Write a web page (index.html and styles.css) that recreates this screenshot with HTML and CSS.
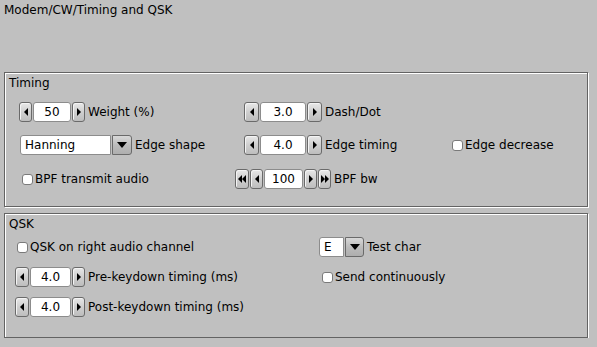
FILE: index.html
```html
<!DOCTYPE html>
<html lang="en">
<head>
    <meta charset="UTF-8">
    <title>Modem/CW/Timing and QSK</title>
    <link rel="stylesheet" href="styles.css">
</head>
<body>
    <div class="title">Modem/CW/Timing and QSK</div>

    <div class="group timing">
        <div class="group-label">Timing</div>

        <div class="row r1">
            <div class="cell">
                <div class="counter">
                    <span class="btn b13"><svg width="4" height="8" viewBox="0 0 4 8"><path d="M4 0v8L0 4z"/></svg></span>
                    <span class="field f38">50</span>
                    <span class="btn b13"><svg width="4" height="8" viewBox="0 0 4 8"><path d="M0 0v8l4-4z"/></svg></span>
                </div>
                <span class="lbl">Weight (%)</span>
            </div>
            <div class="cell">
                <div class="counter">
                    <span class="btn b15"><svg width="4" height="8" viewBox="0 0 4 8"><path d="M4 0v8L0 4z"/></svg></span>
                    <span class="field f46">3.0</span>
                    <span class="btn b15"><svg width="4" height="8" viewBox="0 0 4 8"><path d="M0 0v8l4-4z"/></svg></span>
                </div>
                <span class="lbl">Dash/Dot</span>
            </div>
        </div>

        <div class="row r2">
            <div class="cell shift1">
                <div class="choice">
                    <span class="choice-text c91">Hanning</span>
                    <span class="choice-btn w20"><svg width="10" height="6" viewBox="0 0 10 6"><path d="M0 0h10L5 6z"/></svg></span>
                </div>
                <span class="lbl">Edge shape</span>
            </div>
            <div class="cell">
                <div class="counter">
                    <span class="btn b15"><svg width="4" height="8" viewBox="0 0 4 8"><path d="M4 0v8L0 4z"/></svg></span>
                    <span class="field f46">4.0</span>
                    <span class="btn b15"><svg width="4" height="8" viewBox="0 0 4 8"><path d="M0 0v8l4-4z"/></svg></span>
                </div>
                <span class="lbl">Edge timing</span>
            </div>
            <div class="cell">
                <label class="check"><span class="box"></span>Edge decrease</label>
            </div>
        </div>

        <div class="row r3">
            <div class="cell shift3">
                <label class="check"><span class="box"></span>BPF transmit audio</label>
            </div>
            <div class="cell pull9">
                <div class="counter">
                    <span class="btn b14"><svg width="8" height="8" viewBox="0 0 8 8"><path d="M4 0v8L0 4zM8 0v8L4 4z"/></svg></span>
                    <span class="btn b13"><svg width="4" height="8" viewBox="0 0 4 8"><path d="M4 0v8L0 4z"/></svg></span>
                    <span class="field f39">100</span>
                    <span class="btn b13"><svg width="4" height="8" viewBox="0 0 4 8"><path d="M0 0v8l4-4z"/></svg></span>
                    <span class="btn b13"><svg width="8" height="8" viewBox="0 0 8 8"><path d="M0 0v8l4-4zM4 0v8l4-4z"/></svg></span>
                </div>
                <span class="lbl">BPF bw</span>
            </div>
        </div>
    </div>

    <div class="group qsk">
        <div class="group-label">QSK</div>

        <div class="row q1">
            <div class="cell shift2">
                <label class="check"><span class="box"></span>QSK on right audio channel</label>
            </div>
            <div class="cell">
                <div class="choice">
                    <span class="choice-text c24">E</span>
                    <span class="choice-btn w19"><svg width="10" height="6" viewBox="0 0 10 6"><path d="M0 0h10L5 6z"/></svg></span>
                </div>
                <span class="lbl">Test char</span>
            </div>
        </div>

        <div class="row q2">
            <div class="cell">
                <div class="counter">
                    <span class="btn b14"><svg width="4" height="8" viewBox="0 0 4 8"><path d="M4 0v8L0 4z"/></svg></span>
                    <span class="field f41">4.0</span>
                    <span class="btn b13"><svg width="4" height="8" viewBox="0 0 4 8"><path d="M0 0v8l4-4z"/></svg></span>
                </div>
                <span class="lbl">Pre-keydown timing (ms)</span>
            </div>
            <div class="cell shift3">
                <label class="check"><span class="box"></span>Send continuously</label>
            </div>
        </div>

        <div class="row q3">
            <div class="cell">
                <div class="counter">
                    <span class="btn b14"><svg width="4" height="8" viewBox="0 0 4 8"><path d="M4 0v8L0 4z"/></svg></span>
                    <span class="field f41">4.0</span>
                    <span class="btn b13"><svg width="4" height="8" viewBox="0 0 4 8"><path d="M0 0v8l4-4z"/></svg></span>
                </div>
                <span class="lbl">Post-keydown timing (ms)</span>
            </div>
        </div>
    </div>
</body>
</html>
```

FILE: styles.css
```css
body {
    margin: 0;
    background-color: #c0c0c0;
    font-family: "DejaVu Sans", sans-serif;
    font-size: 12px;
    line-height: 14px;
    color: #000;
}

.title {
    padding: 3px 4px;
}

/* engraved frames */
.group {
    box-sizing: border-box;
    width: 584px;
    margin-left: 4px;
    border: 1px solid #636363;
    box-shadow: 1px 1px 0 #fff, inset 1px 1px 0 #fff;
}

.timing {
    margin-top: 52px;
    height: 135px;
}

.qsk {
    margin-top: 6px;
    height: 125px;
}

.group-label {
    padding: 3px 0 0 4px;
}

.row {
    display: grid;
    height: 20px;
    align-items: center;
}

.timing .row {
    grid-template-columns: 225px 208px 1fr;
    padding-left: 14px;
}

.qsk .row {
    grid-template-columns: 304px 1fr;
    padding-left: 10px;
}

.r1 { margin-top: 12px; }
.r2 { margin-top: 13px; }
.r3 { margin-top: 14px; }
.q1 { margin-top: 6px; }
.q2 { margin-top: 10px; }
.q3 { margin-top: 10px; }

.cell {
    display: flex;
    align-items: center;
}

.shift1 { margin-left: 1px; }
.shift2 { margin-left: 2px; }
.shift3 { margin-left: 3px; }
.pull9 { margin-left: -9px; }

.lbl {
    margin-left: 3px;
    white-space: nowrap;
}

/* counters */
.counter {
    display: flex;
    gap: 1px;
    height: 20px;
}

.btn {
    box-sizing: border-box;
    height: 20px;
    display: flex;
    align-items: center;
    justify-content: center;
    border: 1px solid #6a6a6a;
    border-radius: 3px;
    background: linear-gradient(#e8e8e8, #cfcfcf 50%, #bdbdbd);
    box-shadow: inset 1px 1px 0 #f4f4f4;
}

.btn svg,
.choice-btn svg {
    display: block;
    fill: #000;
}

.b13 { width: 13px; }
.b14 { width: 14px; }
.b15 { width: 15px; }

.field {
    box-sizing: border-box;
    height: 20px;
    background: #fff;
    border: 1px solid #8c8c8c;
    border-radius: 3px;
    text-align: center;
    line-height: 18px;
}

.f38 { width: 38px; }
.f39 { width: 39px; }
.f41 { width: 41px; }
.f46 { width: 46px; }

/* choice */
.choice {
    display: flex;
    gap: 1px;
    height: 20px;
}

.choice-text {
    box-sizing: border-box;
    height: 20px;
    background: #fff;
    border: 1px solid #8c8c8c;
    border-radius: 3px 0 0 3px;
    padding-left: 4px;
    line-height: 18px;
}

.c91 { width: 91px; }
.c24 { width: 25px; }

.choice-btn {
    box-sizing: border-box;
    height: 20px;
    display: flex;
    align-items: center;
    justify-content: center;
    border: 1px solid #6a6a6a;
    border-radius: 0 3px 3px 0;
    background: linear-gradient(#d8d8d8, #bcbcbc 50%, #aeaeae);
}

.w19 { width: 19px; }
.w20 { width: 20px; }

/* check buttons */
.check {
    display: flex;
    align-items: center;
    white-space: nowrap;
}

.box {
    box-sizing: border-box;
    width: 11px;
    height: 11px;
    margin-right: 2px;
    background: #fff;
    border: 1px solid #7a7a7a;
    border-radius: 3px;
}
```
